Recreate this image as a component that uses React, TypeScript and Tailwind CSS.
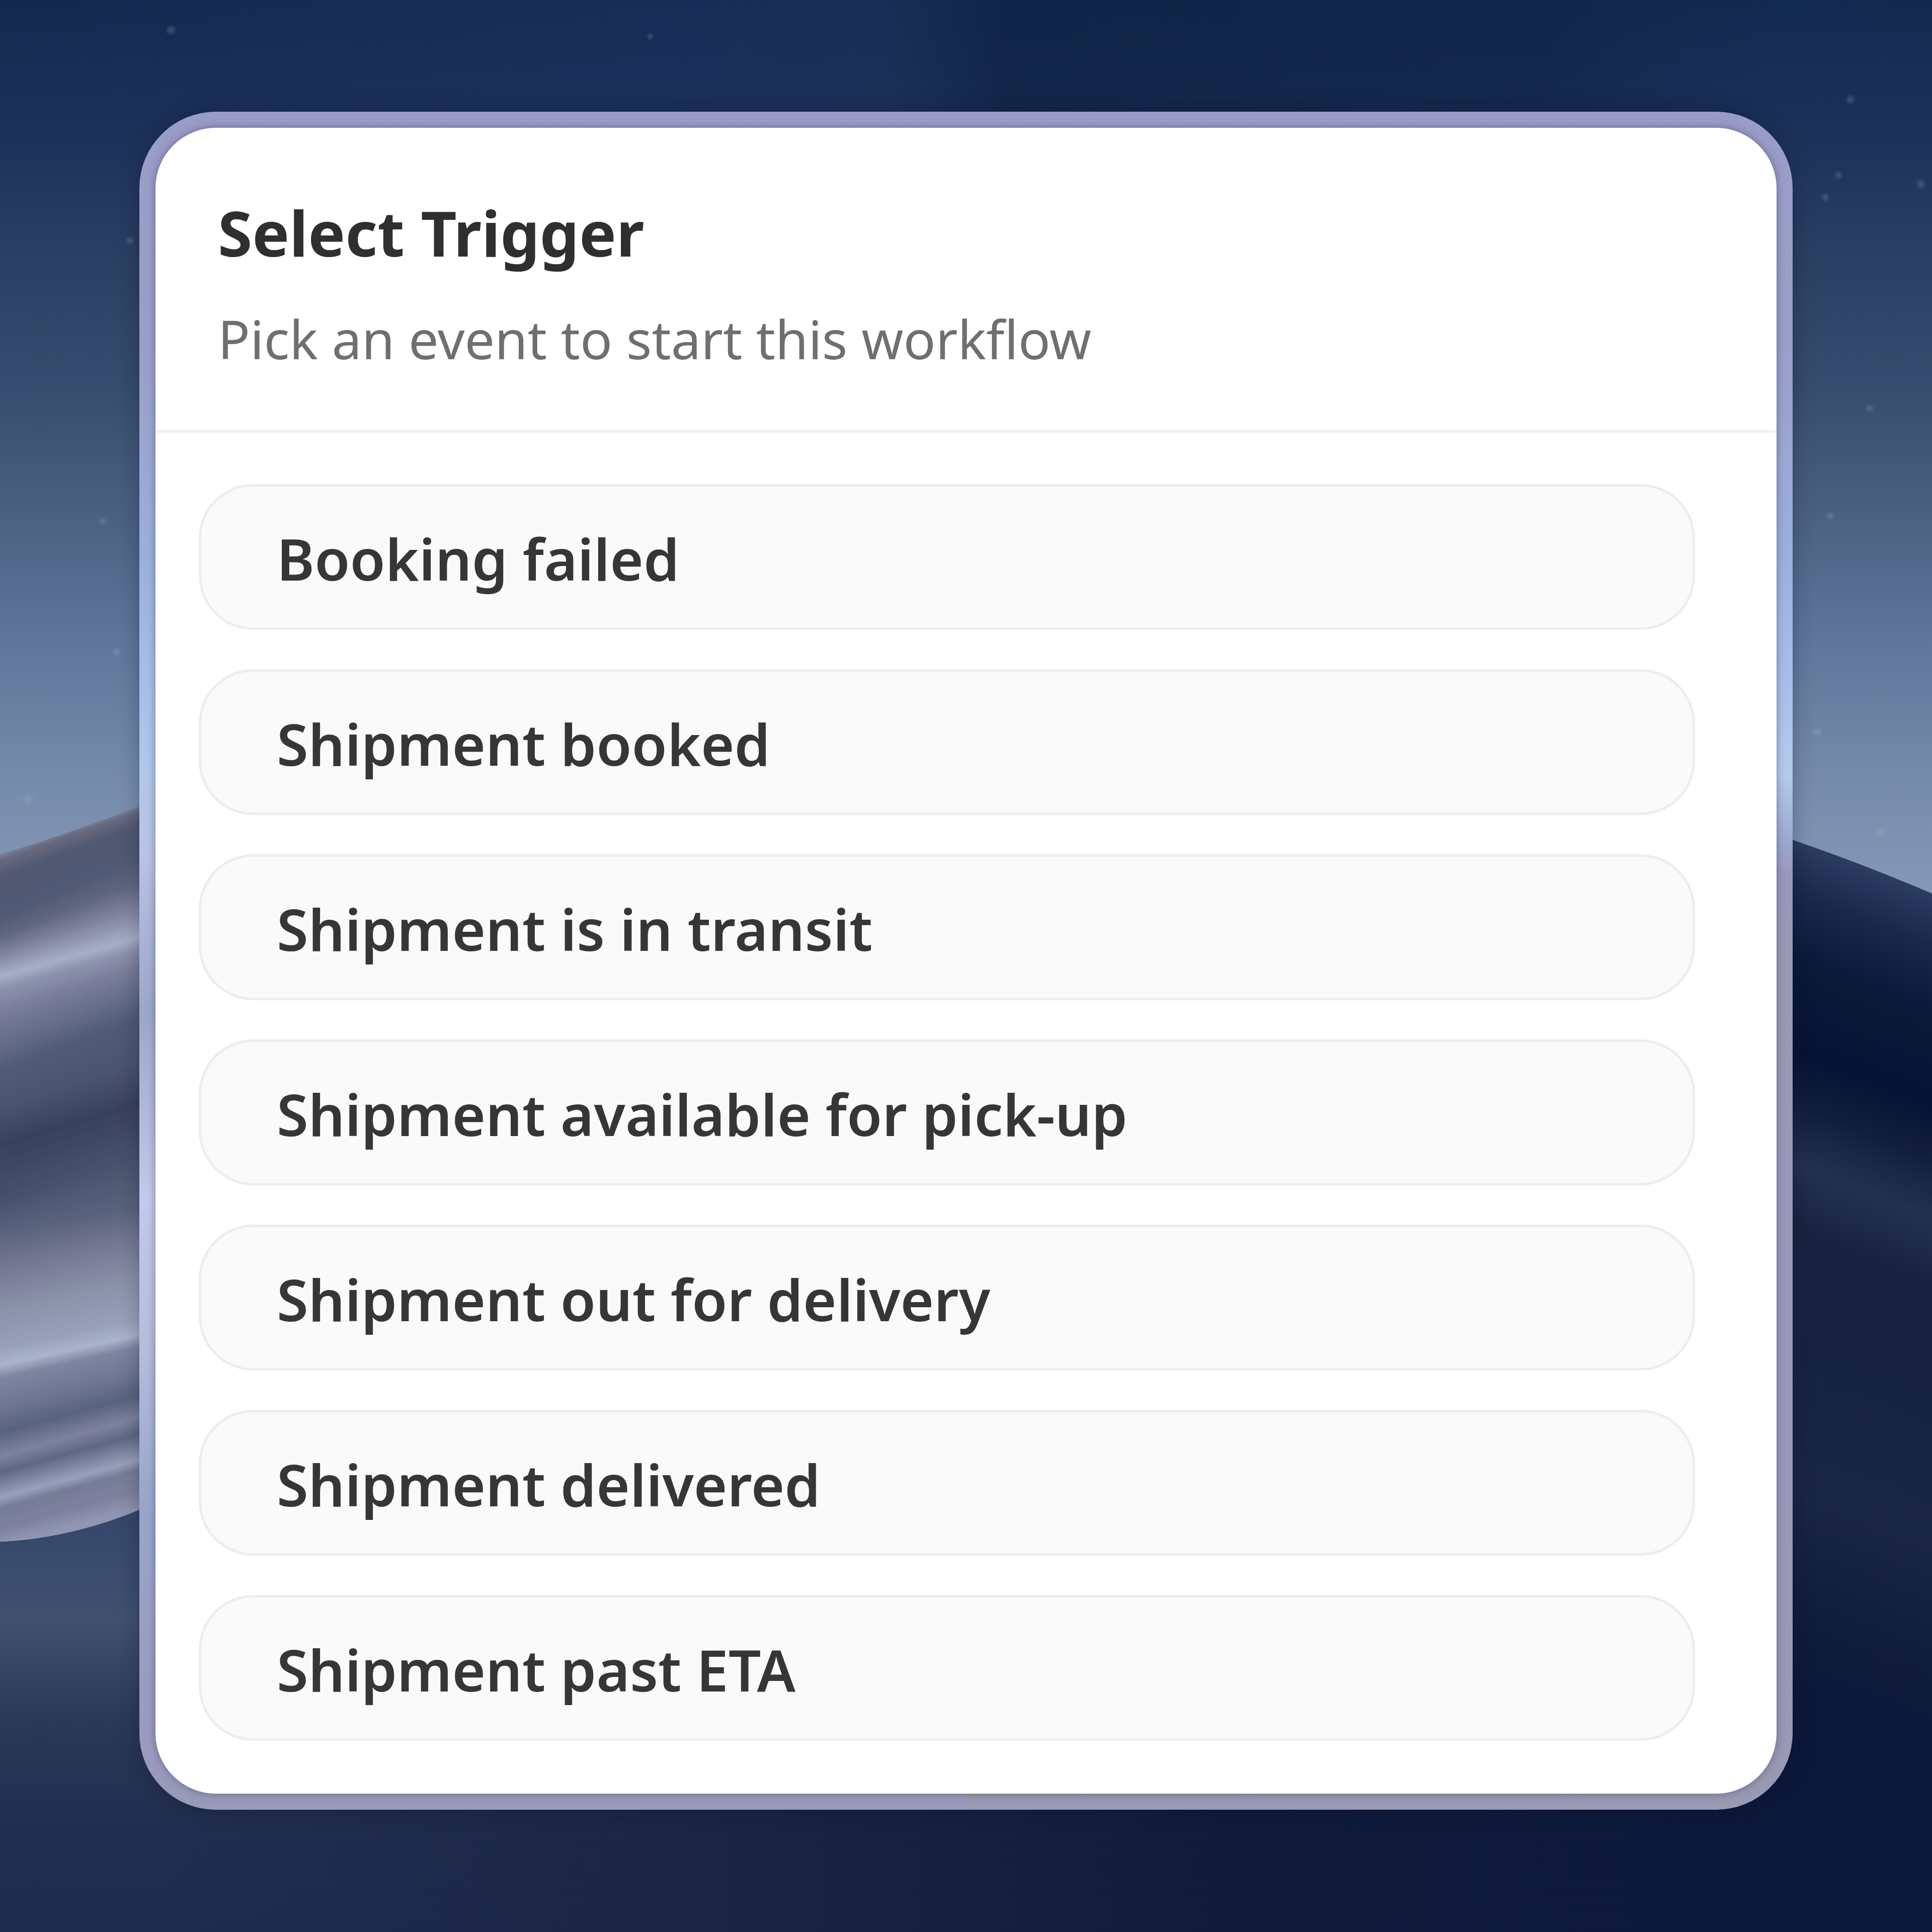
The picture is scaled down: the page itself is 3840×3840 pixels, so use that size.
import { useId } from 'react';

interface Trigger {
  id: string;
  label: string;
}

const triggers: Trigger[] = [
  { id: 'booking_failed', label: 'Booking failed' },
  { id: 'shipment_booked', label: 'Shipment booked' },
  { id: 'shipment_in_transit', label: 'Shipment is in transit' },
  { id: 'shipment_pickup', label: 'Shipment available for pick-up' },
  { id: 'shipment_out', label: 'Shipment out for delivery' },
  { id: 'shipment_delivered', label: 'Shipment delivered' },
  { id: 'shipment_past_eta', label: 'Shipment past ETA' },
];

// [y at the window edge, y at the card, r, g, b]
const ridges: number[][] = [
  [1696, 1599, 122, 132, 158],
  [1710, 1613, 104, 104, 124],
  [1745, 1640, 80, 88, 114],
  [1820, 1700, 80, 90, 116],
  [1860, 1750, 96, 102, 128],
  [1895, 1800, 128, 131, 158],
  [1940, 1862, 168, 176, 200],
  [1965, 1885, 140, 146, 174],
  [2010, 1920, 122, 126, 154],
  [2060, 1960, 104, 112, 140],
  [2130, 2020, 80, 91, 119],
  [2200, 2110, 74, 84, 111],
  [2270, 2190, 56, 65, 95],
  [2390, 2290, 71, 83, 109],
  [2450, 2400, 90, 100, 126],
  [2520, 2460, 118, 120, 148],
  [2600, 2540, 138, 146, 168],
  [2680, 2620, 152, 162, 186],
  [2712, 2652, 170, 180, 204],
  [2740, 2676, 126, 131, 160],
  [2790, 2720, 112, 119, 148],
  [2845, 2770, 88, 99, 125],
  [2893, 2815, 126, 130, 160],
  [2925, 2848, 94, 104, 132],
  [2975, 2900, 154, 161, 188],
  [2998, 2920, 118, 124, 152],
  [3040, 2960, 126, 130, 158],
  [3070, 3000, 146, 152, 180],
];

const STEPS = 10;

const strips = ridges.slice(0, -1).flatMap((from, i) => {
  const to = ridges[i + 1];
  return Array.from({ length: STEPS }, (_, s) => {
    const [left, right, r, g, b] = from.map((value, k) =>
      Math.round(value + ((to[k] - value) * s) / STEPS),
    );
    return { left, right, fill: `rgb(${r} ${g} ${b})` };
  });
});

const stars: number[][] = [
  [340, 60, 12],
  [1292, 72, 8],
  [3678, 198, 12],
  [3654, 348, 10],
  [3818, 366, 12],
  [3628, 392, 10],
  [3716, 812, 10],
  [3638, 1025, 10],
  [3612, 1455, 12],
  [3738, 1653, 14],
  [204, 1036, 10],
  [232, 1296, 10],
  [56, 1588, 14],
  [258, 478, 10],
];

function Wallpaper() {
  const id = useId();

  return (
    <svg
      className="absolute inset-0 size-full"
      viewBox="0 0 3840 3840"
      preserveAspectRatio="none"
      aria-hidden="true"
    >
      <defs>
        <linearGradient id={`${id}sky`} x1="0" y1="0" x2="0" y2="1800" gradientUnits="userSpaceOnUse">
          <stop offset="0" stopColor="#12294e" />
          <stop offset="0.14" stopColor="#1c3058" />
          <stop offset="0.28" stopColor="#2a3f62" />
          <stop offset="0.42" stopColor="#364b6d" />
          <stop offset="0.56" stopColor="#4a5f80" />
          <stop offset="0.7" stopColor="#5e7599" />
          <stop offset="0.84" stopColor="#7388a8" />
          <stop offset="1" stopColor="#8799b8" />
        </linearGradient>
        <linearGradient id={`${id}haze`} x1="0" y1="0" x2="1" y2="0">
          <stop offset="0" stopColor="#1b3060" stopOpacity="0" />
          <stop offset="0.36" stopColor="#1b3060" stopOpacity="0.45" />
          <stop offset="0.46" stopColor="#1d3058" stopOpacity="0.5" />
          <stop offset="0.52" stopColor="#0e2142" stopOpacity="0.6" />
          <stop offset="0.8" stopColor="#0e2142" stopOpacity="0.45" />
          <stop offset="1" stopColor="#183364" stopOpacity="0" />
        </linearGradient>
        <radialGradient id={`${id}star`}>
          <stop offset="0" stopColor="#a9c4d4" stopOpacity="0.25" />
          <stop offset="1" stopColor="#a9c4d4" stopOpacity="0" />
        </radialGradient>
        <linearGradient id={`${id}sand`} x1="0" y1="3000" x2="0" y2="3840" gradientUnits="userSpaceOnUse">
          <stop offset="0" stopColor="#33466a" />
          <stop offset="0.26" stopColor="#41506f" />
          <stop offset="0.5" stopColor="#2b3858" />
          <stop offset="0.75" stopColor="#202e50" />
          <stop offset="1" stopColor="#1d2b4f" />
        </linearGradient>
        <linearGradient id={`${id}floor`} x1="300" y1="0" x2="3840" y2="0" gradientUnits="userSpaceOnUse">
          <stop offset="0" stopColor="#1b2646" stopOpacity="0" />
          <stop offset="0.3" stopColor="#1b2545" />
          <stop offset="0.6" stopColor="#101b3c" />
          <stop offset="1" stopColor="#0b183a" />
        </linearGradient>
        <linearGradient id={`${id}dune`} x1="3562" y1="1669" x2="2860" y2="3469" gradientUnits="userSpaceOnUse">
          <stop offset="0" stopColor="#2c3b60" />
          <stop offset="0.05" stopColor="#1a284c" />
          <stop offset="0.11" stopColor="#0b1a3a" />
          <stop offset="0.2" stopColor="#071335" />
          <stop offset="0.25" stopColor="#111d3c" />
          <stop offset="0.31" stopColor="#233150" />
          <stop offset="0.37" stopColor="#182342" />
          <stop offset="0.5" stopColor="#172343" />
          <stop offset="0.62" stopColor="#1a2645" />
          <stop offset="0.74" stopColor="#101c3c" />
          <stop offset="0.82" stopColor="#0b183a" />
        </linearGradient>
        <clipPath id={`${id}hill`}>
          <path d="M0 1698 Q150 1655 400 1555 V2940 Q200 3055 0 3064 Z" />
        </clipPath>
      </defs>

      <rect width="3840" height="1900" fill={`url(#${id}sky)`} />
      <rect width="3840" height="240" fill={`url(#${id}haze)`} />
      {stars.map(([cx, cy, r]) => (
        <circle key={`${cx}-${cy}`} cx={cx} cy={cy} r={r} fill={`url(#${id}star)`} />
      ))}

      <rect y="1800" width="3840" height="2040" fill={`url(#${id}sand)`} />
      <rect y="3300" width="3840" height="540" fill={`url(#${id}floor)`} />
      <path d="M3400 1615 L3562 1669 Q3700 1716 3840 1776 V3560 H3400 Z" fill={`url(#${id}dune)`} />

      <g clipPath={`url(#${id}hill)`}>
        {strips.map(({ left, right, fill }, i) => (
          <polygon key={i} points={`0,${left} 277,${right} 400,${right - 40} 400,3100 0,3100`} fill={fill} />
        ))}
      </g>
    </svg>
  );
}

function TriggerOption({ label }: { label: string }) {
  return (
    <button
      type="button"
      className="w-full rounded-[108px] border-[5px] border-[#ededee] bg-[#fafafa] pt-[63px] pb-[57px] pl-[150px] text-left text-[114px] leading-[160px] font-semibold text-[#363636]"
    >
      {label}
    </button>
  );
}

export default function App() {
  return (
    <main className="relative min-h-screen bg-[#1b2646] px-[277px] pt-[222px] pb-[243px] font-['Noto_Sans','Open_Sans',sans-serif]">
      <Wallpaper />
      <div className="relative rounded-[152px] bg-[linear-gradient(to_bottom,#999cc6,#999fc8_14%,#9ab0dc_26%,#a8c0e8_34%,#b0c8ea_39%,#b8c2e2_44%,#9ca8c8_53%,#c2c9ea_64%,#b4bddc_73%,#98a6cc_82%,#9a9cc4_92%,#9999b8),linear-gradient(to_bottom,#999cc6,#999fc8_14%,#9ab0dc_26%,#a8c0e8_34%,#b2cbec_39%,#9aa8cf_43%,#9a98ba_45%,#9899b0_52%,#9a98b8_62%,#9a98b8_80%,#9999b2)] bg-[length:50%_100%] bg-[position:left_top,right_top] bg-no-repeat p-[32px] shadow-[0_0_40px_rgba(5,12,40,0.3)]">
        <section className="rounded-[120px] bg-white shadow-[0_0_16px_rgba(60,55,95,0.5)]">
          <header className="border-b-[5px] border-[#efefef] px-[124px] pt-[128px] pb-[102px]">
            <h1 className="text-[124px] leading-[160px] font-bold text-[#2f2f2f]">Select Trigger</h1>
            <p className="mt-[51px] text-[106px] leading-[160px] text-[#6f6f6f]">
              Pick an event to start this workflow
            </p>
          </header>
          <ul className="flex flex-col gap-[78px] pt-[102px] pr-[162px] pb-[105px] pl-[86px]">
            {triggers.map((trigger) => (
              <li key={trigger.id}>
                <TriggerOption label={trigger.label} />
              </li>
            ))}
          </ul>
        </section>
      </div>
    </main>
  );
}
